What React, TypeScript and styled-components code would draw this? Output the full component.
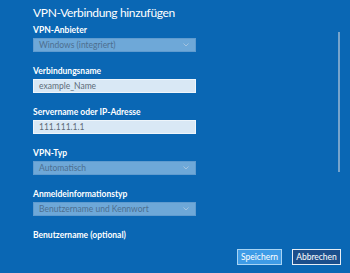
import React from 'react'
import styled, { createGlobalStyle } from 'styled-components'

const GlobalStyle = createGlobalStyle`
  html, body {
    margin: 0;
    padding: 0;
    background: #0a67b4;
  }
  body {
    font-family: Lato, 'Noto Sans', sans-serif;
  }
`

const Page = styled.div`
  display: flex;
  flex-direction: column;
  width: 350px;
  height: 273px;
  overflow: hidden;
  background: #0a67b4;
  color: #ffffff;
`

const Main = styled.div`
  display: flex;
  flex: 1;
  min-height: 0;
`

const Content = styled.div`
  flex: 1;
  padding: 3px 0 0 33px;
`

const Title = styled.h1`
  margin: 0;
  font-size: 12px;
  line-height: 19px;
  font-weight: 400;
  letter-spacing: -0.35px;
`

const Form = styled.div`
  display: flex;
  flex-direction: column;
  gap: 12px;
  margin-top: 1px;
  width: 163px;
`

const Field = styled.div`
  display: flex;
  flex-direction: column;
`

const Label = styled.label`
  font-size: 8.5px;
  line-height: 14px;
  font-weight: 700;
  margin-bottom: 1px;
  white-space: nowrap;
`

const Control = styled.div<{ $select?: boolean }>`
  display: flex;
  align-items: center;
  justify-content: space-between;
  height: 14px;
  box-sizing: border-box;
  padding: 0 6px 0 5px;
  font-size: 8.5px;
  background: ${p => (p.$select ? '#6ea8d8' : '#d9e8f5')};
  border: 1px solid ${p => (p.$select ? '#5f9bcf' : '#eef5fb')};
  color: ${p => (p.$select ? '#4d6f90' : '#5d6b78')};
`

const Chevron = styled.svg`
  width: 6px;
  height: 4px;
`

const ScrollTrack = styled.div`
  width: 12px;
  padding-top: 32px;
`

const Thumb = styled.div`
  width: 2px;
  height: 140px;
  background: rgba(190, 205, 220, 0.6);
`

const Footer = styled.div`
  display: flex;
  justify-content: flex-end;
  gap: 10px;
  padding: 0 9px 8px 0;
`

const Button = styled.button<{ $primary?: boolean }>`
  height: 16px;
  box-sizing: border-box;
  padding: 0;
  width: ${p => (p.$primary ? '45px' : '49px')};
  font-family: inherit;
  font-size: 8.5px;
  color: #ffffff;
  background: ${p => (p.$primary ? '#3e9be6' : '#1c4f8c')};
  border: 1.5px solid ${p => (p.$primary ? '#a8d4f4' : '#e6eef6')};
`

const fields: { label: string; value?: string; select?: boolean }[] = [
  { label: 'VPN-Anbieter', value: 'Windows (integriert)', select: true },
  { label: 'Verbindungsname', value: 'example_Name' },
  { label: 'Servername oder IP-Adresse', value: '111.111.1.1' },
  { label: 'VPN-Typ', value: 'Automatisch', select: true },
  { label: 'Anmeldeinformationstyp', value: 'Benutzername und Kennwort', select: true },
  { label: 'Benutzername (optional)' },
]

export default function App() {
  return (
    <>
      <GlobalStyle />
      <Page>
        <Main>
          <Content>
            <Title>VPN-Verbindung hinzufügen</Title>
            <Form>
              {fields.map(f => (
                <Field key={f.label}>
                  <Label>{f.label}</Label>
                  {f.value && (
                    <Control $select={f.select}>
                      <span>{f.value}</span>
                      {f.select && (
                        <Chevron viewBox="0 0 6 4">
                          <polyline points="0.5,0.5 3,3 5.5,0.5" fill="none" stroke="#a9c6e0" strokeWidth="0.9" />
                        </Chevron>
                      )}
                    </Control>
                  )}
                </Field>
              ))}
            </Form>
          </Content>
          <ScrollTrack>
            <Thumb />
          </ScrollTrack>
        </Main>
        <Footer>
          <Button $primary>Speichern</Button>
          <Button>Abbrechen</Button>
        </Footer>
      </Page>
    </>
  )
}
